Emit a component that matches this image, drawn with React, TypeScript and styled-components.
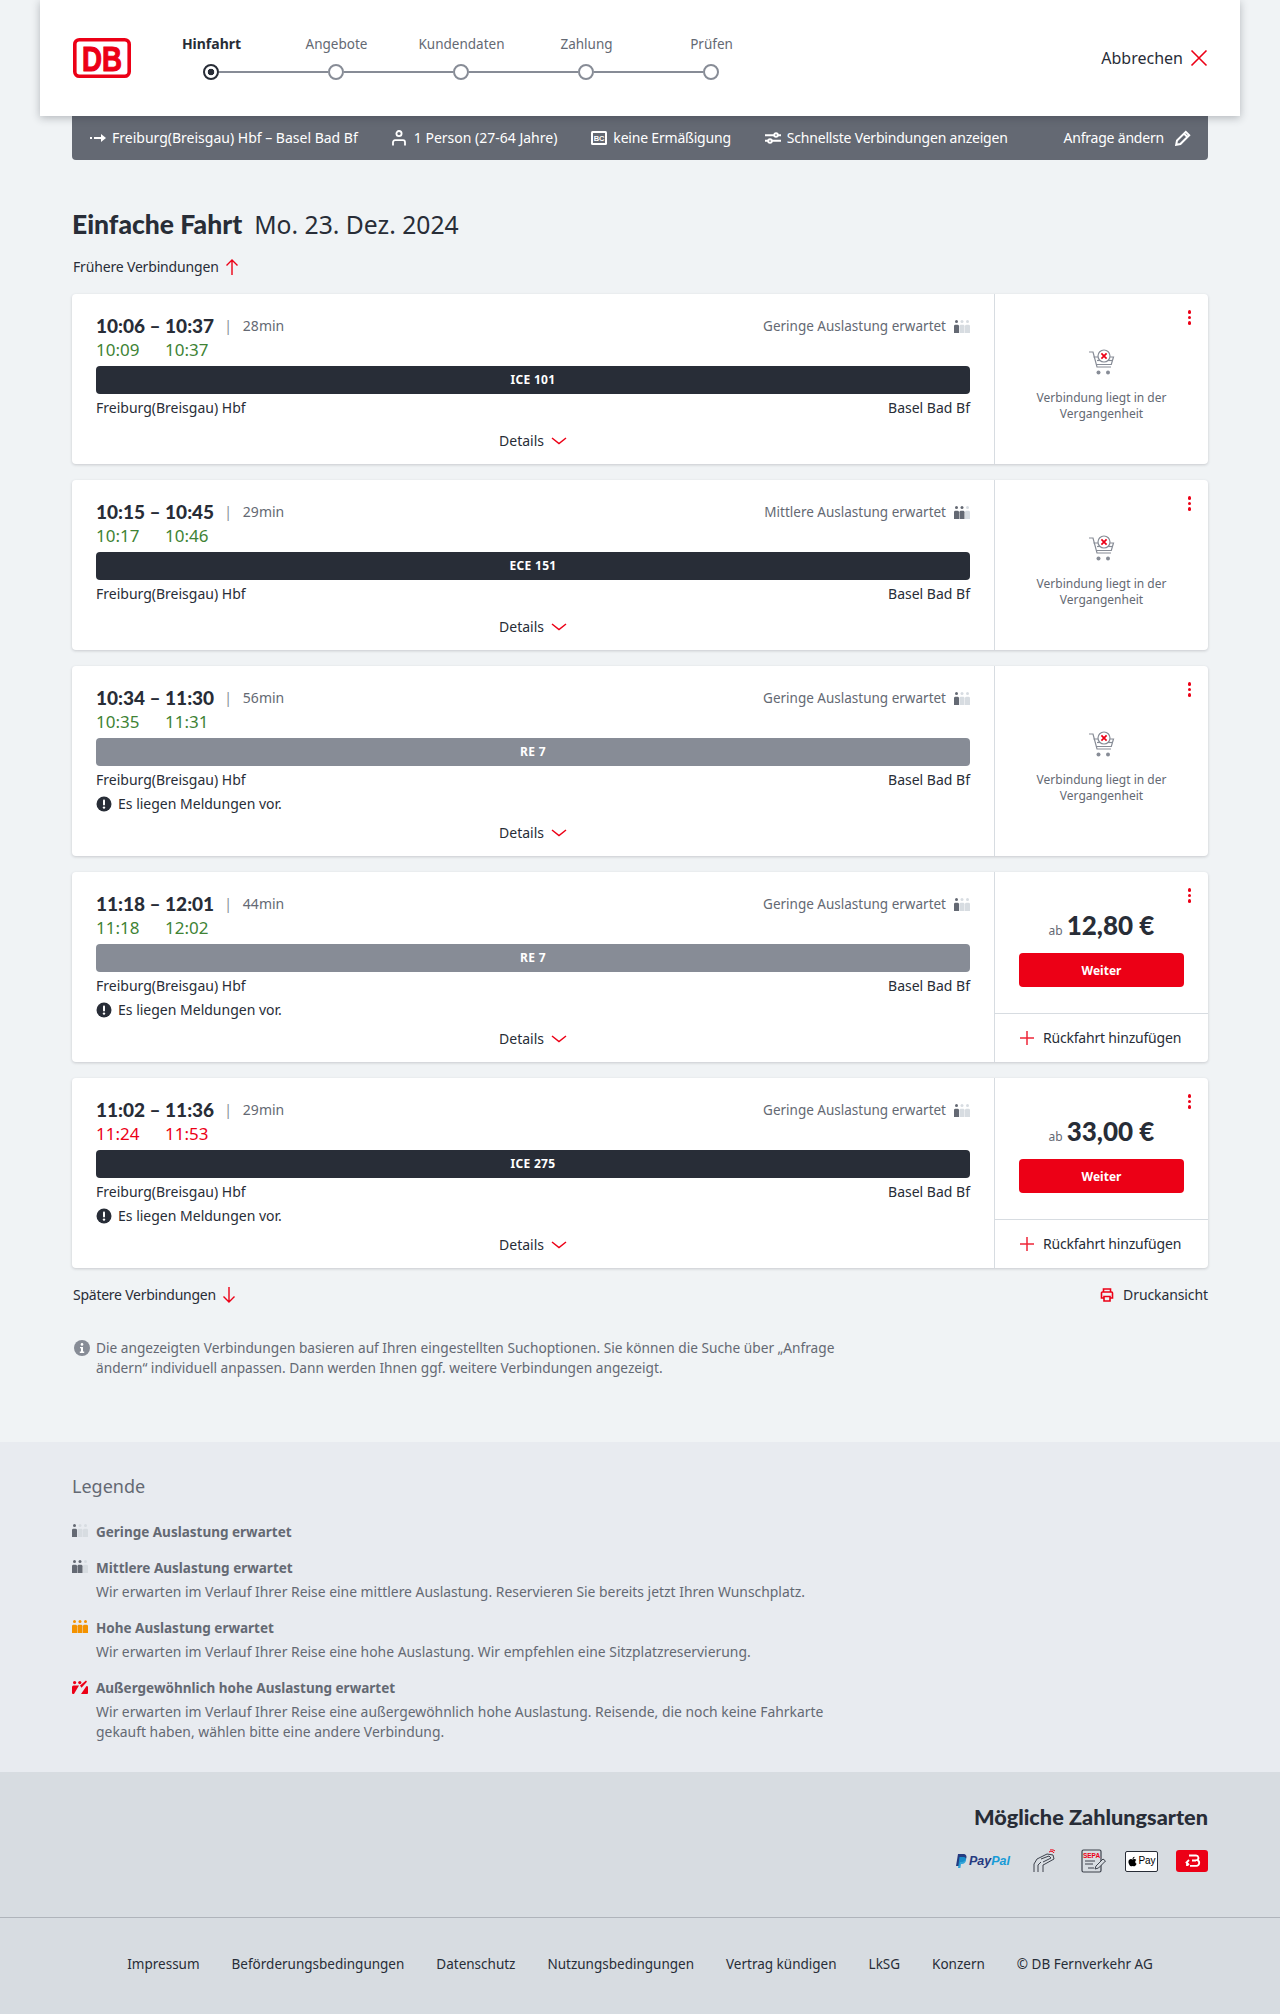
import React from "react"
import styled, { createGlobalStyle } from "styled-components"
import { FaApple } from "react-icons/fa"

const DARK = "#282d37"
const GREY = "#646973"
const MID = "#878c96"
const RED = "#ec0016"
const GREEN = "#408335"
const SANS = `"Noto Sans", "Open Sans", sans-serif`
const HEAD = `Lato, "Noto Sans", sans-serif`

const GlobalStyle = createGlobalStyle`
	* { box-sizing: border-box; }
	html, body { margin: 0; padding: 0; }
	body {
		background: #f0f3f5;
		color: ${DARK};
		font-family: ${SANS};
		font-size: 14px;
		line-height: 20px;
	}
`

interface Connection {
	dep: string
	arr: string
	duration: string
	depReal: string
	arrReal: string
	late?: boolean
	load: 1 | 2
	train: string
	regional?: boolean
	notice?: boolean
	price?: string
}

const connections: Connection[] = [
	{ dep: "10:06", arr: "10:37", duration: "28min", depReal: "10:09", arrReal: "10:37", load: 1, train: "ICE 101" },
	{ dep: "10:15", arr: "10:45", duration: "29min", depReal: "10:17", arrReal: "10:46", load: 2, train: "ECE 151" },
	{ dep: "10:34", arr: "11:30", duration: "56min", depReal: "10:35", arrReal: "11:31", load: 1, train: "RE 7", regional: true, notice: true },
	{ dep: "11:18", arr: "12:01", duration: "44min", depReal: "11:18", arrReal: "12:02", load: 1, train: "RE 7", regional: true, notice: true, price: "12,80 €" },
	{ dep: "11:02", arr: "11:36", duration: "29min", depReal: "11:24", arrReal: "11:53", late: true, load: 1, train: "ICE 275", notice: true, price: "33,00 €" }
]

const steps = ["Hinfahrt", "Angebote", "Kundendaten", "Zahlung", "Prüfen"]
const footerLinks = ["Impressum", "Beförderungsbedingungen", "Datenschutz", "Nutzungsbedingungen", "Vertrag kündigen", "LkSG", "Konzern", "© DB Fernverkehr AG"]

const Occupancy = ({ level, color = GREY, off = "#d7dce1" }: { level: number; color?: string; off?: string }) => (
	<svg width="16" height="13" viewBox="0 0 16 13">
		{[0, 1, 2].map((i) => {
			const x = i * 5.5
			const fill = i < level ? color : off
			return (
				<g key={i} fill={fill}>
					<circle cx={x + 2.5} cy="1.6" r="1.5" />
					<path d={`M${x} 6.2a1.4 1.4 0 0 1 1.4-1.4h2.2a1.4 1.4 0 0 1 1.4 1.4V13H${x}z`} />
				</g>
			)
		})}
	</svg>
)

const OverloadIcon = () => (
	<svg width="16" height="14" viewBox="0 0 16 14">
		<g fill={RED}>
			<circle cx="2.6" cy="2.6" r="1.6" />
			<circle cx="7.8" cy="2.6" r="1.6" />
			<path d="M0 7a1.5 1.5 0 0 1 1.5-1.5H7L2 14H1a1 1 0 0 1-1-1z" />
			<path d="M9 14l5.5-8 1.5.6V13a1 1 0 0 1-1 1z" />
			<path d="M8 5.5l6-5 1 1.2-5.5 6z" />
		</g>
	</svg>
)

const ArrowIcon = ({ down }: { down?: boolean }) => (
	<svg width="16" height="18" viewBox="0 0 16 18" fill="none" stroke={RED} strokeWidth="1.4">
		{down ? <path d="M8 1v15M2.5 10.5L8 16l5.5-5.5" /> : <path d="M8 17V2M2.5 7.5L8 2l5.5 5.5" />}
	</svg>
)

const Chevron = () => (
	<svg width="16" height="10" viewBox="0 0 16 10" fill="none" stroke={RED} strokeWidth="1.5">
		<path d="M1 2l7 5.5L15 2" />
	</svg>
)

const CartIcon = () => (
	<svg width="28" height="28" viewBox="0 0 28 28" fill="none" stroke={MID} strokeWidth="1.2">
		<path d="M1 3h4l4 15h14" />
		<path d="M5.5 8h20l-2.2 7.5H8" />
		<path d="M9 11.5h15" />
		<circle cx="16" cy="7" r="6" fill="#fff" />
		<path d="M13.4 4.4l5.2 5.2M18.6 4.4l-5.2 5.2" stroke={RED} strokeWidth="1.7" />
		<circle cx="10.5" cy="23.5" r="2" fill={MID} stroke="none" />
		<circle cx="20" cy="23.5" r="2" fill={MID} stroke="none" />
	</svg>
)

const InfoIcon = ({ size, color }: { size: number; color: string }) => (
	<svg width={size} height={size} viewBox="0 0 16 16">
		<circle cx="8" cy="8" r="8" fill={color} />
		<circle cx="8" cy="4.4" r="1.3" fill="#fff" />
		<path d="M6 7h3v4.6h1.2v1.3H5.8v-1.3H7V8.3H6z" fill="#fff" />
	</svg>
)

const AlertIcon = () => (
	<svg width="16" height="16" viewBox="0 0 16 16">
		<circle cx="8" cy="8" r="7.5" fill={DARK} />
		<rect x="7" y="3.4" width="2" height="6" rx="0.8" fill="#fff" />
		<circle cx="8" cy="11.6" r="1.2" fill="#fff" />
	</svg>
)

const ConnectionCard = ({ item }: { item: Connection }) => (
	<Card>
		<CardMain>
			<TimeGrid>
				<Times>{item.dep} – </Times>
				<Times>{item.arr}</Times>
				<Duration>
					<Pipe>|</Pipe>
					{item.duration}
				</Duration>
				<LoadInfo>
					{item.load === 1 ? "Geringe" : "Mittlere"} Auslastung erwartet
					<Occupancy level={item.load} />
				</LoadInfo>
				<Delay $late={item.late}>{item.depReal}</Delay>
				<Delay $late={item.late}>{item.arrReal}</Delay>
			</TimeGrid>
			<TrainBar $regional={item.regional}>{item.train}</TrainBar>
			<Stations>
				<span>Freiburg(Breisgau) Hbf</span>
				<span>Basel Bad Bf</span>
			</Stations>
			{item.notice && (
				<Notice>
					<AlertIcon />
					Es liegen Meldungen vor.
				</Notice>
			)}
			<Details $tight={item.notice}>
				Details
				<Chevron />
			</Details>
		</CardMain>
		<CardSide>
			<MenuDots>
				<i />
				<i />
				<i />
			</MenuDots>
			{item.price ? (
				<>
					<Offer>
						<PriceRow>
							<small>ab</small>
							<strong>{item.price}</strong>
						</PriceRow>
						<NextButton>Weiter</NextButton>
					</Offer>
					<ReturnRow>
						<svg width="16" height="16" viewBox="0 0 16 16" stroke={RED} strokeWidth="1.5" opacity="0.85">
							<path d="M8 1v14M1 8h14" />
						</svg>
						Rückfahrt hinzufügen
					</ReturnRow>
				</>
			) : (
				<PastBox>
					<CartIcon />
					<PastText>Verbindung liegt in der Vergangenheit</PastText>
				</PastBox>
			)}
		</CardSide>
	</Card>
)

const App = () => (
	<>
		<GlobalStyle />
		<Header>
			<Logo viewBox="0 0 58 40">
				<rect x="1.8" y="1.8" width="54.4" height="36.4" rx="4.5" fill="#fff" stroke={RED} strokeWidth="3.6" />
				<text x="29" y="32.6" textAnchor="middle" fontFamily='"Liberation Sans", sans-serif' fontWeight="700" fontSize="35" fill={RED} stroke={RED} strokeWidth="1.1" textLength="40" lengthAdjust="spacingAndGlyphs">
					DB
				</text>
			</Logo>
			<Stepper>
				<StepLabels>
					{steps.map((step, i) => (
						<StepLabel key={step} $active={i === 0}>
							{step}
						</StepLabel>
					))}
				</StepLabels>
				<Track>
					{steps.map((step, i) => (
						<React.Fragment key={step}>
							<StepDot $active={i === 0} />
							{i < steps.length - 1 && <StepLine />}
						</React.Fragment>
					))}
				</Track>
			</Stepper>
			<Cancel>
				Abbrechen
				<svg width="18" height="18" viewBox="0 0 18 18" stroke={RED} strokeWidth="1.6">
					<path d="M1.5 1.5l15 15M16.5 1.5l-15 15" />
				</svg>
			</Cancel>
		</Header>
		<Page>
			<SearchBar>
				<SearchItem>
					<svg width="16" height="10" viewBox="0 0 16 10" fill="#fff">
						<rect x="0" y="4" width="2" height="2" />
						<path d="M4 4h7V1l5 4-5 4V6H4z" />
					</svg>
					Freiburg(Breisgau) Hbf – Basel Bad Bf
				</SearchItem>
				<SearchItem $gap={8}>
					<svg width="14" height="16" viewBox="0 0 14 16" fill="none" stroke="#fff" strokeWidth="1.8">
						<circle cx="7" cy="3.6" r="2.6" />
						<path d="M1 15.5v-3.3a2 2 0 0 1 2-2h8a2 2 0 0 1 2 2v3.3" />
					</svg>
					1 Person (27-64 Jahre)
				</SearchItem>
				<SearchItem $tight>
					<svg width="16" height="14" viewBox="0 0 16 14">
						<rect width="16" height="14" rx="1.5" fill="#fff" />
						<rect x="2" y="2" width="12" height="10" fill={GREY} />
						<text x="8" y="10" textAnchor="middle" fontSize="7.5" fontWeight="700" fontFamily="Liberation Sans, sans-serif" fill="#fff">
							BC
						</text>
					</svg>
					keine Ermäßigung
				</SearchItem>
				<SearchItem $tight>
					<svg width="16" height="12" viewBox="0 0 16 12" fill="none" stroke="#fff" strokeWidth="1.9">
						<path d="M0 3.2h9M13 3.2h3M0 8.8h3M7 8.8h9" />
						<circle cx="11" cy="3" r="1.8" />
						<circle cx="5" cy="9" r="1.8" />
					</svg>
					Schnellste Verbindungen anzeigen
				</SearchItem>
				<ChangeRequest $tight>
					Anfrage ändern
					<svg width="16" height="16" viewBox="0 0 16 16" fill="none" stroke="#fff" strokeWidth="2">
						<path d="M1.2 14.8l.8-4.2L10.8 1.8l3.4 3.4-8.8 8.8zM9 3.6l3.4 3.4" />
					</svg>
				</ChangeRequest>
			</SearchBar>
			<Title>
				<strong>Einfache Fahrt</strong>
				<span>Mo. 23. Dez. 2024</span>
			</Title>
			<PagerLink>
				Frühere Verbindungen
				<ArrowIcon />
			</PagerLink>
			<CardList>
				{connections.map((item) => (
					<ConnectionCard key={item.dep} item={item} />
				))}
			</CardList>
			<BelowRow>
				<PagerInline>
					Spätere Verbindungen
					<ArrowIcon down />
				</PagerInline>
				<PrintLink>
					<svg width="14" height="14" viewBox="0 0 14 14" fill="none" stroke={RED} strokeWidth="1.6">
						<path d="M3.5 4V1h7v3M3.5 10H1.500V5a1 1 0 0 1 1-1h9a1 1 0 0 1 1 1v5h-2M4 8.5h6V13H4z" />
					</svg>
					Druckansicht
				</PrintLink>
			</BelowRow>
			<InfoBlock>
				<InfoIcon size={16} color={MID} />
				<p>
					Die angezeigten Verbindungen basieren auf Ihren eingestellten Suchoptionen. Sie können die Suche über „Anfrage ändern“ individuell anpassen. Dann werden Ihnen ggf. weitere Verbindungen
					angezeigt.
				</p>
			</InfoBlock>
		</Page>
		<Legend>
			<LegendInner>
				<LegendTitle>Legende</LegendTitle>
				<LegendItem>
					<LegendIcon>
						<Occupancy level={1} off="#d7dce1" />
					</LegendIcon>
					<div>
						<LegendHead>Geringe Auslastung erwartet</LegendHead>
					</div>
				</LegendItem>
				<LegendItem>
					<LegendIcon>
						<Occupancy level={2} off="#d7dce1" />
					</LegendIcon>
					<div>
						<LegendHead>Mittlere Auslastung erwartet</LegendHead>
						<LegendText>Wir erwarten im Verlauf Ihrer Reise eine mittlere Auslastung. Reservieren Sie bereits jetzt Ihren Wunschplatz.</LegendText>
					</div>
				</LegendItem>
				<LegendItem>
					<LegendIcon>
						<Occupancy level={3} color="#f39200" />
					</LegendIcon>
					<div>
						<LegendHead>Hohe Auslastung erwartet</LegendHead>
						<LegendText>Wir erwarten im Verlauf Ihrer Reise eine hohe Auslastung. Wir empfehlen eine Sitzplatzreservierung.</LegendText>
					</div>
				</LegendItem>
				<LegendItem>
					<LegendIcon>
						<OverloadIcon />
					</LegendIcon>
					<div>
						<LegendHead>Außergewöhnlich hohe Auslastung erwartet</LegendHead>
						<LegendText>
							Wir erwarten im Verlauf Ihrer Reise eine außergewöhnlich hohe Auslastung. Reisende, die noch keine Fahrkarte gekauft haben, wählen bitte eine andere Verbindung.
						</LegendText>
					</div>
				</LegendItem>
			</LegendInner>
		</Legend>
		<Payment>
			<PaymentTitle>Mögliche Zahlungsarten</PaymentTitle>
			<PaymentIcons>
				<PayPal>
					<svg width="12" height="14" viewBox="0 0 12 14">
						<path d="M3 0h5c3 0 4 2 3.3 4.2C10.600 6.800 8.600 8 6.500 8H5l-.8 4H1z" fill="#253b80" />
						<path d="M4.500 3h4c2 0 3 1.500 2.500 3.500S9 10 7 10H6l-.6 4H3z" fill="#179bd7" opacity="0.85" />
					</svg>
					<b>Pay</b>
					<b>Pal</b>
				</PayPal>
				<svg width="26" height="24" viewBox="0 0 26 24" fill="none" stroke="#3c414b" strokeWidth="1">
					<path d="M3 23v-8l3-5 10-5 6 1 1 4-9 5-2 1v7" />
					<path d="M7 23v-7l3-3M10 10l8-3 2 2-8 4" />
					<path d="M18 3c2-1 4-1 5 1M19 1c2-.5 4 0 5 1" stroke={RED} />
				</svg>
				<svg width="26" height="24" viewBox="0 0 26 24" fill="none">
					<rect x="1" y="1" width="19" height="22" rx="1.500" stroke="#3c414b" strokeWidth="1.200" />
					<text x="10.500" y="9" textAnchor="middle" fontSize="6.500" fontWeight="700" fontFamily="Liberation Sans, sans-serif" fill={RED}>
						SEPA
					</text>
					<path d="M4 12h10M4 15h8M7 19h6" stroke="#3c414b" strokeWidth="1" />
					<path d="M14 20l1-3 7-7 2.500 2-7 7z" fill="#d7dce1" stroke="#3c414b" strokeWidth="1" />
				</svg>
				<ApplePay>
					<FaApple size={11} />
					Pay
				</ApplePay>
				<svg width="32" height="22" viewBox="0 0 32 22">
					<rect width="32" height="22" rx="3" fill={RED} />
					<path d="M13 5.500h7a2.400 2.400 0 0 1 1 4.600 2.900 2.900 0 0 1-1 5.700h-6M16 10.500h4M13 10l-2.500 2.500L13 15M11 12.500v3.500" fill="none" stroke="#fff" strokeWidth="1.800" />
				</svg>
			</PaymentIcons>
		</Payment>
		<Footer>
			{footerLinks.map((link) => (
				<span key={link}>{link}</span>
			))}
		</Footer>
	</>
)

const Header = styled.header`
	position: relative;
	z-index: 2;
	display: flex;
	align-items: flex-start;
	height: 116px;
	margin: 0 40px;
	padding: 0 32px 0 33px;
	background: #fff;
	box-shadow: 0 2px 8px rgba(40, 45, 55, 0.3);
`
const Logo = styled.svg`
	width: 58px;
	height: 40px;
	margin-top: 38px;
	flex: none;
`
const Stepper = styled.div`
	margin-left: 18px;
	padding-top: 34px;
`
const StepLabels = styled.div`
	display: flex;
`
const StepLabel = styled.div<{ $active?: boolean }>`
	width: 125px;
	text-align: center;
	font-size: ${({ $active }) => ($active ? 14 : 13.5)}px;
	font-weight: ${({ $active }) => ($active ? 700 : 400)};
	color: ${({ $active }) => ($active ? DARK : GREY)};
`
const Track = styled.div`
	display: flex;
	align-items: center;
	margin: 10px 0 0 54px;
`
const StepDot = styled.span<{ $active?: boolean }>`
	width: 16px;
	height: 16px;
	flex: none;
	border-radius: 50%;
	border: 2px solid ${({ $active }) => ($active ? DARK : MID)};
	background: ${({ $active }) => ($active ? `radial-gradient(circle, ${DARK} 3px, #fff 3.6px)` : "#fff")};
`
const StepLine = styled.span`
	width: 109px;
	height: 2px;
	background: ${MID};
`
const Cancel = styled.div`
	display: flex;
	align-items: center;
	gap: 7px;
	margin-left: auto;
	margin-top: 48px;
	font-size: 16px;
`
const Page = styled.main`
	padding: 0 72px 64px;
`
const SearchBar = styled.div`
	display: flex;
	align-items: center;
	gap: 34px;
	height: 44px;
	padding: 0 17px 0 18px;
	border-radius: 0 0 4px 4px;
	background: ${GREY};
	color: #fff;
`
const SearchItem = styled.div<{ $gap?: number; $tight?: boolean }>`
	display: flex;
	align-items: center;
	gap: ${({ $gap }) => $gap ?? 6}px;
	letter-spacing: ${({ $tight }) => ($tight ? "-0.2px" : "normal")};
`
const ChangeRequest = styled(SearchItem)`
	gap: 11px;
	margin-left: auto;
`
const Title = styled.h1`
	display: flex;
	align-items: baseline;
	gap: 12px;
	height: 32px;
	margin: 48px 0 0;
	font-size: 24.7px;
	line-height: 32px;
	font-weight: 400;
	strong {
		font-family: ${HEAD};
		font-size: 26.5px;
		font-weight: 900;
	}
`
const PagerLink = styled.div`
	display: flex;
	align-items: center;
	gap: 5px;
	height: 20px;
	margin: 17px 0 17px 1px;
	letter-spacing: -0.17px;
`
const CardList = styled.div`
	display: flex;
	flex-direction: column;
	gap: 16px;
`
const Card = styled.article`
	display: flex;
	background: #fff;
	border-radius: 4px;
	box-shadow: 0 1px 3px rgba(40, 45, 55, 0.2);
`
const CardMain = styled.div`
	flex: 1;
	min-width: 0;
	padding: 20px 24px 11px;
`
const TimeGrid = styled.div`
	display: grid;
	grid-template-columns: auto auto auto 1fr;
	grid-auto-rows: 24px;
	align-items: center;
	margin-bottom: 4px;
`
const Times = styled.span`
	font-family: ${HEAD};
	font-size: 19px;
	font-weight: 900;
	white-space: pre;
`
const Duration = styled.span`
	display: flex;
	gap: 11px;
	margin-left: 10px;
	font-size: 14px;
	color: ${GREY};
`
const Pipe = styled.span`
	color: ${MID};
`
const LoadInfo = styled.span`
	display: flex;
	align-items: center;
	justify-content: flex-end;
	gap: 8px;
	font-size: 13.5px;
	color: ${GREY};
`
const Delay = styled.span<{ $late?: boolean }>`
	font-size: 17px;
	color: ${({ $late }) => ($late ? RED : GREEN)};
`
const TrainBar = styled.div<{ $regional?: boolean }>`
	height: 28px;
	border-radius: 4px;
	background: ${({ $regional }) => ($regional ? MID : DARK)};
	color: #fff;
	font-size: 12px;
	font-weight: 700;
	letter-spacing: 0.3px;
	line-height: 28px;
	text-align: center;
`
const Stations = styled.div`
	display: flex;
	justify-content: space-between;
	margin-top: 4px;
`
const Notice = styled.div`
	display: flex;
	align-items: center;
	gap: 6px;
	margin-top: 4px;
`
const Details = styled.div<{ $tight?: boolean }>`
	display: flex;
	align-items: center;
	justify-content: center;
	gap: 7px;
	height: 24px;
	margin-top: ${({ $tight }) => ($tight ? 7 : 11)}px;
`
const CardSide = styled.div`
	position: relative;
	display: flex;
	flex-direction: column;
	width: 214px;
	flex: none;
	border-left: 1px solid #d7dce1;
`
const MenuDots = styled.div`
	position: absolute;
	top: 16px;
	right: 17px;
	display: flex;
	flex-direction: column;
	gap: 2px;
	i {
		width: 3.5px;
		height: 3.5px;
		border-radius: 50%;
		background: ${RED};
	}
`
const PastBox = styled.div`
	display: flex;
	flex: 1;
	flex-direction: column;
	align-items: center;
	justify-content: center;
	padding-top: 13px;
	color: ${GREY};
`
const PastText = styled.p`
	width: 150px;
	margin: 13px 0 0;
	font-size: 12px;
	line-height: 16px;
	text-align: center;
`
const Offer = styled.div`
	height: 142px;
	padding: 37px 24px 0;
	border-bottom: 1px solid #d7dce1;
`
const PriceRow = styled.div`
	display: flex;
	align-items: baseline;
	justify-content: center;
	gap: 4px;
	height: 32px;
	small {
		font-size: 12px;
		color: ${GREY};
	}
	strong {
		font-family: ${HEAD};
		font-size: 26px;
		font-weight: 900;
		line-height: 32px;
	}
`
const NextButton = styled.button`
	display: block;
	width: 165px;
	height: 34px;
	margin-top: 12px;
	border: 0;
	border-radius: 4px;
	background: ${RED};
	color: #fff;
	font-family: ${SANS};
	font-size: 12px;
	font-weight: 700;
`
const ReturnRow = styled.div`
	display: flex;
	flex: 1;
	align-items: center;
	gap: 8px;
	padding-left: 24px;
	letter-spacing: -0.2px;
`
const BelowRow = styled.div`
	display: flex;
	justify-content: space-between;
	height: 20px;
	margin-top: 17px;
`
const PagerInline = styled.div`
	display: flex;
	align-items: center;
	gap: 5px;
	margin-left: 1px;
	letter-spacing: -0.25px;
`
const PrintLink = styled.div`
	display: flex;
	align-items: center;
	gap: 9px;
	letter-spacing: -0.1px;
`
const InfoBlock = styled.div`
	display: flex;
	gap: 6px;
	width: 780px;
	margin: 33px 0 0 2px;
	font-size: 13.7px;
	color: ${GREY};
	svg {
		flex: none;
		margin-top: 2px;
	}
	p {
		margin: 0;
	}
`
const Legend = styled.section`
	padding: 32px 72px 30px;
	background: #e8ebf0;
	color: ${GREY};
`
const LegendInner = styled.div`
	display: flex;
	flex-direction: column;
	gap: 16px;
	width: 780px;
`
const LegendTitle = styled.h2`
	height: 24px;
	margin: 0 0 8px;
	font-size: 18px;
	line-height: 24px;
	font-weight: 400;
`
const LegendItem = styled.div`
	display: flex;
	gap: 8px;
`
const LegendIcon = styled.div`
	flex: none;
	width: 16px;
	height: 20px;
	padding-top: 2px;
	line-height: 0;
`
const LegendHead = styled.div`
	font-size: 13.5px;
	font-weight: 700;
`
const LegendText = styled.div`
	margin-top: 4px;
	font-size: 13.9px;
`
const Payment = styled.section`
	display: flex;
	flex-direction: column;
	align-items: flex-end;
	height: 145px;
	padding: 31px 72px 0;
	background: #d7dce1;
`
const PaymentTitle = styled.h2`
	height: 28px;
	margin: 0;
	font-family: ${HEAD};
	font-size: 21.7px;
	font-weight: 900;
	line-height: 28px;
`
const PaymentIcons = styled.div`
	display: flex;
	align-items: center;
	gap: 18px;
	height: 24px;
	margin-top: 18px;
	> :nth-child(2) {
		margin: 0 6px 0 3px;
	}
`
const PayPal = styled.div`
	display: flex;
	align-items: center;
	gap: 2px;
	font-family: "Liberation Sans", sans-serif;
	font-size: 12.5px;
	font-style: italic;
	b {
		color: #253b80;
		margin: 0;
	}
	b:last-child {
		margin-left: -2px;
		color: #179bd7;
	}
`
const ApplePay = styled.div`
	display: flex;
	align-items: center;
	justify-content: center;
	width: 33px;
	height: 21px;
	border: 1px solid #282d37;
	border-radius: 2px;
	background: #fff;
	color: #000;
	font-family: "Liberation Sans", sans-serif;
	font-size: 10px;
`
const Footer = styled.footer`
	display: flex;
	align-items: center;
	justify-content: center;
	gap: 32px;
	height: 97px;
	padding-bottom: 5px;
	border-top: 1px solid #afb4bb;
	background: #d7dce1;
	font-size: 13.5px;
`

export default App
